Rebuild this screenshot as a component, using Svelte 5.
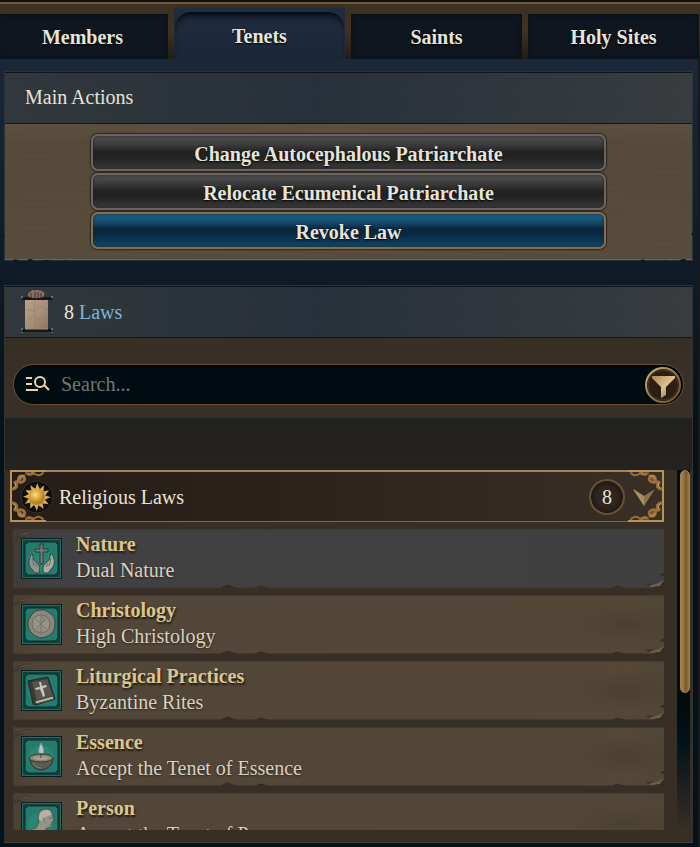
<script>
  const tabs = ['Members', 'Tenets', 'Saints', 'Holy Sites'];
  const actions = [
    { label: 'Change Autocephalous Patriarchate', primary: false },
    { label: 'Relocate Ecumenical Patriarchate', primary: false },
    { label: 'Revoke Law', primary: true },
  ];
  const laws = [
    { icon: 'hands', title: 'Nature', value: 'Dual Nature' },
    { icon: 'seal', title: 'Christology', value: 'High Christology' },
    { icon: 'book', title: 'Liturgical Practices', value: 'Byzantine Rites' },
    { icon: 'lamp', title: 'Essence', value: 'Accept the Tenet of Essence' },
    { icon: 'person', title: 'Person', value: 'Accept the Tenet of Person' },
  ];
  const lawCount = 8;
  const rays = Array.from({ length: 12 }, (_, i) => i * 30);

  let activeTab = $state('Tenets');
  let search = $state('');
  let open = $state(true);
</script>

{#snippet corner(cls)}
  <svg class="corner {cls}" viewBox="0 0 36 26" fill="none" stroke="#97703a" stroke-width="2" stroke-linecap="round">
    <path d="M1 26V1h35" stroke="#b8935a" />
    <path d="M3 19c4-1 5-4 2-7M5 13c5-2 5-6 9-7M9 12c4 1 7-2 5-5-2-2-6-1-5 2" stroke-width="3" />
    <path d="M16 3c2 3 6 2 8 0M25 4c3 2 6 1 8-1" />
    <path d="M4 18c2-2 2-4 1-5M8 9c1-2 4-4 6-3M18 3c2 1 4 0 5-1" stroke="#c9a264" stroke-width="1" />
  </svg>
{/snippet}

<div class="page">
  <nav class="tabs">
    {#each tabs as tab}
      <button class="tab" class:active={tab === activeTab} onclick={() => (activeTab = tab)}>{tab}</button>
    {/each}
  </nav>

  <main>
    <section class="panel actions-panel">
      <h2 class="panel-head">Main Actions</h2>
      <div class="actions">
        {#each actions as action}
          <button class="action" class:primary={action.primary}>{action.label}</button>
        {/each}
      </div>
      <svg class="tear left" viewBox="0 0 64 32" fill="#16191a">
        <path d="M0 6l1 2-1 2zM8 32l3-2 3 1 3 1zM23 32l2-2 3 0 1 2zM38 32l2-1 5 0 3 1zM60 32l2-1 2 1z" />
      </svg>
      <svg class="tear right" viewBox="0 0 64 32" fill="#16191a">
        <path d="M0 3l2 2-2 2zM6 32l2-2 3 0 3 2zM48 32l2-2 3 2zM26 32l3-1 2 1z" />
      </svg>
    </section>

    <section class="panel laws-panel">
      <h2 class="panel-head laws-head">
        <svg class="scroll" viewBox="0 0 32 44">
          <defs>
            <linearGradient id="paper" x1="0" y1="0" x2="1" y2="1">
              <stop offset="0" stop-color="#b8a289" />
              <stop offset=".5" stop-color="#a89178" />
              <stop offset="1" stop-color="#8e775f" />
            </linearGradient>
          </defs>
          <path d="M4 10h23v29H4z" fill="url(#paper)" />
          <path d="M5 19l9 2 4-5 8 3M6 29l8-3 4 3 7-3M14 12l-1 9 2 6-1 9" fill="none" stroke="#7f6b55" opacity=".3" />
          <path d="M1 7h30v3H1zM1 39h30v3H1z" fill="#15181b" />
          <path d="M0 6h2v2H0zM30 6h2v2h-2zM0 38h2v2H0zM30 38h2v2h-2zM0 42h2v1H0zM30 42h2v1h-2z" fill="#5f7362" />
          <path d="M4 39h23" stroke="#9c8f7b" />
          <path d="M7 6c0-4 2-5 3-4 1-3 3-3 4-1 1-2 3-2 4 0 2-1 3 0 3 1 2-1 3 1 2 4-2 3-14 3-16 0z" fill="#8d7064" />
          <path d="M10 3v5M14 2v6M17 2v6M20 3v5" stroke="#3d2d2b" />
        </svg>
        <span>{lawCount} <a href="#laws">Laws</a></span>
      </h2>

      <div class="search-area">
        <label class="search">
          <svg class="search-icon" viewBox="0 0 24 18" fill="none" stroke="#efd4a4" stroke-width="2">
            <path d="M0 2h6M0 8h6M0 14h12M18 9l5 5" />
            <circle cx="14" cy="6" r="5" />
          </svg>
          <input type="text" placeholder="Search..." aria-label="Search" bind:value={search} />
          <button class="filter" aria-label="Filter">
            <svg viewBox="0 0 38 38">
              <defs>
                <linearGradient id="gold" x1="0" y1="0" x2="1" y2="1">
                  <stop offset="0" stop-color="#a88754" />
                  <stop offset=".5" stop-color="#dcc18e" />
                  <stop offset="1" stop-color="#85683a" />
                </linearGradient>
                <linearGradient id="ring" x1="0" y1="0" x2="1" y2="1">
                  <stop offset="0" stop-color="#cfbc92" />
                  <stop offset=".5" stop-color="#94743f" />
                  <stop offset="1" stop-color="#6a5029" />
                </linearGradient>
              </defs>
              <circle cx="19" cy="19" r="17" fill="#2b1f15" stroke="url(#ring)" stroke-width="2" />
              <circle cx="19" cy="19" r="15" fill="none" stroke="#4a3820" />
              <path d="M8 10h23v2l-9 9v8l-5 3V21l-9-9z" fill="url(#gold)" />
            </svg>
          </button>
        </label>
      </div>
      <div class="spacer"></div>

      <div class="list-area" id="laws">
        <div class="list">
          <button class="group" aria-expanded={open} onclick={() => (open = !open)}>
            {@render corner('tl')}
            {@render corner('bl')}
            {@render corner('tr')}
            {@render corner('br')}
            <svg class="sun" viewBox="0 0 34 34">
              <defs>
                <radialGradient id="sun" cx=".4" cy=".35">
                  <stop offset="0" stop-color="#f6dc82" />
                  <stop offset=".6" stop-color="#dcaa42" />
                  <stop offset="1" stop-color="#b98429" />
                </radialGradient>
              </defs>
              <circle cx="17" cy="17" r="16" fill="#0d0e0d" stroke="#383226" />
              {#each rays as angle}
                <path d="M14 10c3-2 1-4 4-7-1 3 2 4 2 7z" fill="#d9ad50" transform="rotate({angle} 17 17)" />
              {/each}
              <circle cx="17" cy="17" r="8" fill="url(#sun)" />
            </svg>
            <span class="group-name">Religious Laws</span>
            <span class="count">{lawCount}</span>
            <svg class="chevron" viewBox="0 0 24 18">
              <path d="M1 1l11 7 11-7-11 17z" fill="#8d744a" />
              <path d="M1 1l11 7v10z" fill="#a88d5e" />
            </svg>
          </button>

          {#if open}
            <ul>
              {#each laws as law, i}
                <li class="law" class:plain={i === 0}>
                  <svg class="fold" viewBox="0 0 20 10">
                    <path d="M0 10L3 5l12-4 3 1-7 4z" fill="#40362c" />
                    <path d="M3 6l12-4 2 1-6 2z" fill="#5b4e3f" />
                  </svg>
                  <svg class="law-icon" viewBox="0 0 41 41">
                    <rect width="41" height="41" fill="#07201e" />
                    <rect x="1.5" y="1.5" width="38" height="38" fill="#123f3b" stroke="#246b61" />
                    <path d="M7 4h27l3 3v27l-3 3H7l-3-3V7z" fill="#257c6e" stroke="#0a2e2b" />
                    <ellipse cx="20" cy="22" rx="13" ry="12" fill="#2f9581" opacity=".4" />
                    {#if law.icon === 'hands'}
                      <path d="M19 6h3v5h5v3h-5v12h-3V14h-5v-3h5z" fill="#737c77" stroke="#2b3a38" />
                      <path d="M11 15c-3 5-4 10-2 14l5 6h4c1-4 1-7-1-9l-4-4z" fill="#92968f" stroke="#354542" />
                      <path d="M30 15c4 5 4 10 2 14l-5 6h-4c-2-4-1-7 1-9l4-4z" fill="#a9aba4" stroke="#354542" />
                      <path d="M11 20l2 8M30 20l-2 8M27 25l-2 4M14 25l2 4" stroke="#626c69" />
                    {:else if law.icon === 'seal'}
                      <path d="M20 6c4-1 7 2 10 4 4 3 4 6 4 10 0 5-2 9-5 11-4 2-8 4-12 2-4-1-7-4-9-8-2-5-1-10 2-13 2-4 6-6 10-6z" fill="#89887a" stroke="#35423c" />
                      <circle cx="20" cy="20" r="9" fill="#949384" stroke="#6c6d61" />
                      <path d="M15 15l10 10M25 15L15 25M20 12v16M20 13c4-1 4 5 0 4M16 28h9" fill="none" stroke="#77776b" />
                    {:else if law.icon === 'book'}
                      <path d="M7 11l20-4 7 22-19 6-3-1z" fill="#393a36" stroke="#1b2b28" />
                      <path d="M11 12l15-3 6 17-16 5z" fill="#55554e" />
                      <path d="M14 31l18-5 1 3-18 5z" fill="#b9b6a8" stroke="#41453e" />
                      <path d="M18 12h2l1 4 4-1 1 2-4 1 2 8-2 1-3-8-4 1-1-2 5-1z" fill="#cac7ba" />
                    {:else if law.icon === 'lamp'}
                      <path d="M20 7c-3 6-3 10 0 12 4-2 3-6 0-12z" fill="#bcc8c0" stroke="#739a8d" />
                      <path d="M9 22c0 6 3 11 11 12 8-1 12-6 12-12z" fill="#5b5b50" stroke="#25302c" />
                      <ellipse cx="20" cy="22" rx="12" ry="4" fill="#858372" stroke="#343b34" />
                      <ellipse cx="20" cy="22" rx="8" ry="2" fill="#a5a18f" />
                      <path d="M20 22v-5" stroke="#3b3d35" />
                      <path d="M12 27c2 4 5 5 8 5" stroke="#8b897b" fill="none" />
                    {:else}
                      <path d="M5 37c1-7 5-10 10-11l3-6c-3-7 1-13 7-13 5 0 7 4 7 8l1 4-2 1v3c0 2-2 3-5 3l-2 2 1 9z" fill="#94938a" stroke="#445650" />
                      <path d="M18 17c0-6 3-9 7-9 4 0 5 2 5 5l-6 2-2 5z" fill="#b5b2a7" />
                      <path d="M21 17c2-2 3 1 1 3M28 16h3M28 23h3" stroke="#6a695f" fill="none" />
                    {/if}
                  </svg>
                  <div class="law-text">
                    <h3>{law.title}</h3>
                    <p>{law.value}</p>
                  </div>
                  <svg class="notch left" viewBox="0 0 54 4" fill="#352c24">
                    <path d="M0 4c4-1 5-4 9-3l8 3zM34 4c4-1 5-3 9-2l5 2z" />
                  </svg>
                  <svg class="rip" viewBox="0 0 54 16">
                    <path d="M0 16c4-1 5-3 8-2l7 2zM54 0v4l-6-1zM54 9v7H42z" fill="#352c24" />
                    <path d="M38 14l10-3 5-3-4 6-9 1z" fill="#6b5f50" />
                    <path d="M34 12l9-1-5 3z" fill="#3d3329" />
                  </svg>
                </li>
              {/each}
            </ul>
          {/if}
        </div>
        <div class="track"><div class="thumb"></div></div>
      </div>
    </section>
  </main>
</div>

<style>
  :global(body) {
    background: #04121b;
  }

  * {
    box-sizing: border-box;
  }

  .page {
    display: flex;
    flex-direction: column;
    height: 100vh;
    min-height: 600px;
    overflow: hidden;
    font-family: 'Liberation Serif', serif;
    font-size: 20px;
    line-height: 26px;
    color: #e6e4d8;
  }

  button {
    font: inherit;
    color: inherit;
    border: 0;
    padding: 0;
    cursor: pointer;
  }

  h2,
  h3,
  p,
  ul {
    margin: 0;
    padding: 0;
    font: inherit;
    list-style: none;
  }

  .tabs {
    display: grid;
    grid-template-columns: repeat(4, 1fr);
    gap: 6px;
    align-items: end;
    flex: none;
    height: 59px;
    padding-right: 1px;
    margin-left: -3px;
    background: linear-gradient(#14100c 0 2px, #6b5a41 2px 4px, #3c3022 4px 14px, #41331f 30px, #211c18);
  }

  .tab {
    height: 45px;
    background: #0f161f;
    font-weight: bold;
    text-shadow: 0 1px 2px #000;
  }

  .tab.active {
    height: 52px;
    padding-top: 6px;
    background: linear-gradient(#212c3e, #1b2638);
    border-radius: 2px 2px 0 0;
    position: relative;
  }

  .tab:not(.active) {
    box-shadow: inset 0 0 4px #090e14;
  }

  .tab.active::before {
    content: '';
    position: absolute;
    inset: 5px 1px 0;
    border-top: 2px solid #080e17;
    border-radius: 16px 16px 0 0;
    box-shadow: inset 0 5px 6px -3px #070d17;
  }

  main {
    display: flex;
    flex-direction: column;
    gap: 24px;
    flex: 1;
    min-height: 0;
    padding: 12px 5px 4px 4px;
    border-right: 2px solid #1c1815;
    background: linear-gradient(#1c2836, #192637 20px, #0f1c27 200px, #04121b 380px);
  }

  .panel {
    position: relative;
    border: 1px solid #29333b;
  }

  .panel-head {
    display: flex;
    align-items: center;
    height: 52px;
    padding: 0 20px 2px;
    border-bottom: 1px solid #10161b;
    box-shadow: inset 0 1px #0e1319;
    background:
      repeating-linear-gradient(0deg, #0000 0 2px, #00000009 2px 3px),
      linear-gradient(90deg, #32383c, #28313b 45%, #393d40);
  }

  .actions {
    display: flex;
    flex-direction: column;
    align-items: center;
    gap: 2px;
    padding: 10px 0;
    background:
      repeating-linear-gradient(2deg, #0000 0 4px, #00000005 4px 6px),
      linear-gradient(#5d5040, #564a3a 20px, #584c3c);
    border-bottom: 1px solid #6d614f;
  }

  .action {
    width: 75%;
    height: 37px;
    padding-top: 2px;
    border: 2px solid #6a6562;
    border-radius: 7px;
    background: linear-gradient(#504f50, #414041 22%, #232223 48%, #222 65%, #39393a);
    box-shadow: 0 0 1px 1px #2d2720, inset 0 0 3px #222;
    font-weight: bold;
    text-shadow: 0 1px 2px #000;
  }

  .action.primary {
    border-color: #83704b;
    background: linear-gradient(#1d608b, #174b6e 25%, #08263e 45%, #0a2b45 65%, #144668);
  }

  .tear {
    position: absolute;
    bottom: -1px;
    width: 64px;
    height: 32px;
  }

  .tear.left {
    left: -1px;
  }

  .tear.right {
    right: -1px;
    transform: scaleX(-1);
  }

  .laws-panel {
    display: flex;
    flex-direction: column;
    flex: 1;
    min-height: 0;
    background: #372e25;
    border-color: #333230;
    border-bottom-color: #4b4337;
  }

  .laws-head {
    flex: none;
    gap: 11px;
    padding: 0 16px;
  }

  .scroll {
    width: 32px;
    height: 44px;
  }

  a {
    color: #79b6d7;
    text-decoration: none;
  }

  .search-area {
    padding: 26px 8px 13px;
    background: linear-gradient(#372f26, #393026 50%, #392f26);
  }

  .search {
    display: flex;
    align-items: center;
    height: 41px;
    padding-left: 12px;
    border: 1px solid #69532f;
    border-radius: 21px;
    background: #010c12;
    box-shadow: inset 0 0 3px #000;
  }

  .search-icon {
    flex: none;
    width: 24px;
    height: 18px;
  }

  input {
    flex: 1;
    min-width: 0;
    height: 38px;
    padding: 0 11px;
    border: 0;
    outline: 0;
    background: none;
    color: inherit;
    font: inherit;
  }

  input::placeholder {
    color: #727774;
    opacity: 1;
  }

  .filter {
    width: 38px;
    height: 38px;
    background: none;
    margin-right: 1px;
  }

  .filter svg {
    display: block;
  }

  .spacer {
    flex: none;
    height: 52px;
    background: linear-gradient(#21211f, #25231f);
  }

  .list-area {
    display: flex;
    justify-content: space-between;
    flex: 1;
    min-height: 0;
    margin-bottom: 12px;
    padding: 0 2px 0 5px;
  }

  .list {
    flex: 1;
    overflow-y: auto;
    scrollbar-width: none;
  }

  .group {
    position: relative;
    display: flex;
    align-items: center;
    width: 100%;
    height: 52px;
    padding: 0 9px 0 9px;
    border: 1px solid #86693a;
    border-top: 2px solid #a08558;
    background: linear-gradient(90deg, #261d18, #2b221b 40%, #392f25);
    text-align: left;
  }

  .corner {
    position: absolute;
    width: 36px;
    height: 26px;
  }

  .tl {
    left: -1px;
    top: -2px;
  }

  .bl {
    left: -1px;
    bottom: -1px;
    transform: scaleY(-1);
  }

  .tr {
    right: -1px;
    top: -2px;
    transform: scaleX(-1);
  }

  .br {
    right: -1px;
    bottom: -1px;
    transform: scale(-1);
  }

  .sun {
    position: relative;
    width: 34px;
    height: 34px;
  }

  .group-name {
    flex: 1;
    padding-left: 5px;
  }

  .count {
    width: 36px;
    height: 36px;
    border: 2px solid #675232;
    border-radius: 50%;
    background: #30261f;
    box-shadow: inset 0 0 5px 2px #1d1612;
    line-height: 32px;
    text-align: center;
  }

  .chevron {
    position: relative;
    width: 24px;
    height: 18px;
    margin-left: 7px;
    margin-right: -2px;
  }

  ul {
    display: flex;
    flex-direction: column;
    gap: 9px;
    padding: 8px 0 0 4px;
  }

  .law {
    position: relative;
    display: flex;
    align-items: center;
    flex: none;
    gap: 14px;
    height: 57px;
    padding-left: 7px;
    background:
      radial-gradient(ellipse 56px 20px at 94% 50%, #4a4032, #4a403200),
      linear-gradient(90deg, #4b4034, #524638 30px, #544738 95%, #504536);
    box-shadow: 0 0 1px 1px #443a2f;
  }

  .law.plain {
    background: linear-gradient(90deg, #3e3b39, #414042 30px, #414041);
  }

  .law-icon {
    width: 41px;
    height: 41px;
  }

  .law-text {
    padding-bottom: 3px;
  }

  h3 {
    color: #dac68f;
    font-weight: bold;
    text-shadow: 1px 2px 2px #1d1710;
  }

  .law p {
    color: #d9d1c1;
    text-shadow: 0 1px 2px #2a231b;
  }

  .fold {
    position: absolute;
    left: -1px;
    top: 0;
    width: 20px;
    height: 10px;
  }

  .notch {
    position: absolute;
    left: 206px;
    bottom: -1px;
    width: 54px;
    height: 4px;
  }

  .rip {
    position: absolute;
    right: -1px;
    bottom: -1px;
    width: 54px;
    height: 16px;
  }

  .track {
    width: 13px;
    margin-left: 13px;
    padding-left: 3px;
    background: linear-gradient(#010b10 65%, #02111a 75%, #02111a00);
  }

  .thumb {
    height: 62%;
    border: 1px solid #a58149;
    border-radius: 5px;
    background: linear-gradient(90deg, #a88449, #94713a 40%, #745729 60%, #9b783f);
  }
</style>
